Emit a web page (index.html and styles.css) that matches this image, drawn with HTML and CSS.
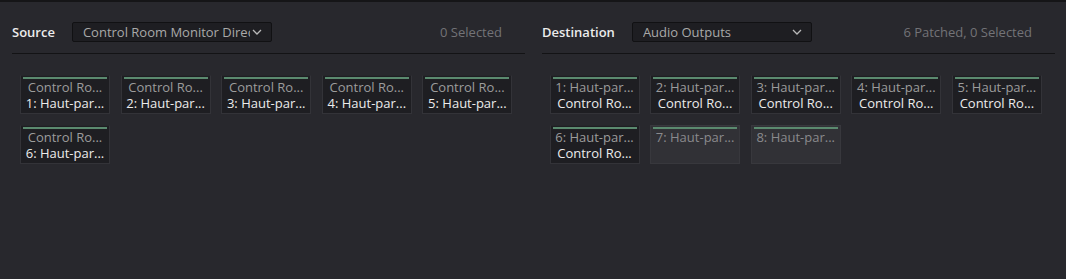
FILE: index.html
```html
<!DOCTYPE html>
<html>
<head>
<meta charset="utf-8">
<link rel="stylesheet" href="styles.css">
</head>
<body>
<div class="topbar"></div>
<div class="panels">
  <section class="panel">
    <div class="header">
      <span class="label">Source</span>
      <div class="select src"><span class="sel-text">Control Room Monitor Direct</span><svg class="chev" width="10" height="6" viewBox="0 0 10 6"><path d="M1 1 L5 5 L9 1" fill="none" stroke="#b8b8b8" stroke-width="1.3"/></svg></div>
      <span class="count">0 Selected</span>
    </div>
    <div class="grid">
      <div class="tile"><span class="l1">Control Ro...</span><span class="l2">1: Haut-par...</span></div>
      <div class="tile"><span class="l1">Control Ro...</span><span class="l2">2: Haut-par...</span></div>
      <div class="tile"><span class="l1">Control Ro...</span><span class="l2">3: Haut-par...</span></div>
      <div class="tile"><span class="l1">Control Ro...</span><span class="l2">4: Haut-par...</span></div>
      <div class="tile"><span class="l1">Control Ro...</span><span class="l2">5: Haut-par...</span></div>
      <div class="tile"><span class="l1">Control Ro...</span><span class="l2">6: Haut-par...</span></div>
    </div>
  </section>
  <section class="panel">
    <div class="header">
      <span class="label">Destination</span>
      <div class="select dst"><span class="sel-text">Audio Outputs</span><svg class="chev" width="10" height="6" viewBox="0 0 10 6"><path d="M1 1 L5 5 L9 1" fill="none" stroke="#b8b8b8" stroke-width="1.3"/></svg></div>
      <span class="count">6 Patched, 0 Selected</span>
    </div>
    <div class="grid">
      <div class="tile"><span class="l1">1: Haut-par...</span><span class="l2">Control Ro...</span></div>
      <div class="tile"><span class="l1">2: Haut-par...</span><span class="l2">Control Ro...</span></div>
      <div class="tile"><span class="l1">3: Haut-par...</span><span class="l2">Control Ro...</span></div>
      <div class="tile"><span class="l1">4: Haut-par...</span><span class="l2">Control Ro...</span></div>
      <div class="tile"><span class="l1">5: Haut-par...</span><span class="l2">Control Ro...</span></div>
      <div class="tile"><span class="l1">6: Haut-par...</span><span class="l2">Control Ro...</span></div>
      <div class="tile empty"><span class="l1">7: Haut-par...</span></div>
      <div class="tile empty"><span class="l1">8: Haut-par...</span></div>
    </div>
  </section>
</div>
</body>
</html>
```
FILE: styles.css
```css
html, body {
  margin: 0;
  padding: 0;
  background: #28282d;
  width: 1066px;
  height: 279px;
  overflow: hidden;
  font-family: "Open Sans", "Noto Sans", sans-serif;
}
.topbar {
  height: 2px;
  background: #151517;
}
.panels {
  display: flex;
  gap: 17px;
  padding: 0 11px 0 12px;
}
.panel {
  width: 513px;
  flex: none;
}
.header {
  display: flex;
  align-items: center;
  height: 51px;
  border-bottom: 1px solid #131315;
  padding-top: 8px;
  box-sizing: border-box;
  margin-top: 1px;
}
.label {
  color: #ececec;
  font-weight: 600;
  font-size: 13px;
  margin-right: 17px;
}
.select {
  height: 20px;
  box-sizing: border-box;
  background: #1e1e22;
  border: 1px solid #111113;
  border-radius: 2px;
  display: flex;
  align-items: center;
  padding-left: 10px;
  padding-right: 9px;
  color: #a9a9a9;
  font-size: 13px;
}
.select.src { width: 200px; }
.select.dst { width: 180px; }
.sel-text {
  flex: 1;
  overflow: hidden;
  white-space: nowrap;
}
.chev { flex: none; margin-left: 2px; }
.count {
  margin-left: auto;
  margin-right: 23px;
  color: #737377;
  font-size: 13px;
}
.grid {
  display: grid;
  grid-template-columns: repeat(5, 90px);
  column-gap: 10.6px;
  row-gap: 11px;
  padding: 21px 0 0 7.5px;
}
.panel:first-child .grid { padding-left: 8px; }
.tile {
  height: 39px;
  box-sizing: border-box;
  background: #1e1e22;
  border: 1px solid #333338;
  border-top-color: #26262a;
  display: flex;
  flex-direction: column;
  align-items: center;
  position: relative;
  padding-top: 4px;
  font-size: 13px;
  line-height: 15.5px;
}
.tile::before {
  content: "";
  position: absolute;
  left: 2px;
  right: 2px;
  top: 1px;
  height: 2px;
  background: #5b8a6f;
}
.tile.empty {
  background: #313136;
  border-color: #38383d;
}
.l1 { color: #9c9c9c; white-space: nowrap; }
.l2 { color: #ececec; white-space: nowrap; }
.tile.empty .l1 { color: #8a8a8d; }
```
